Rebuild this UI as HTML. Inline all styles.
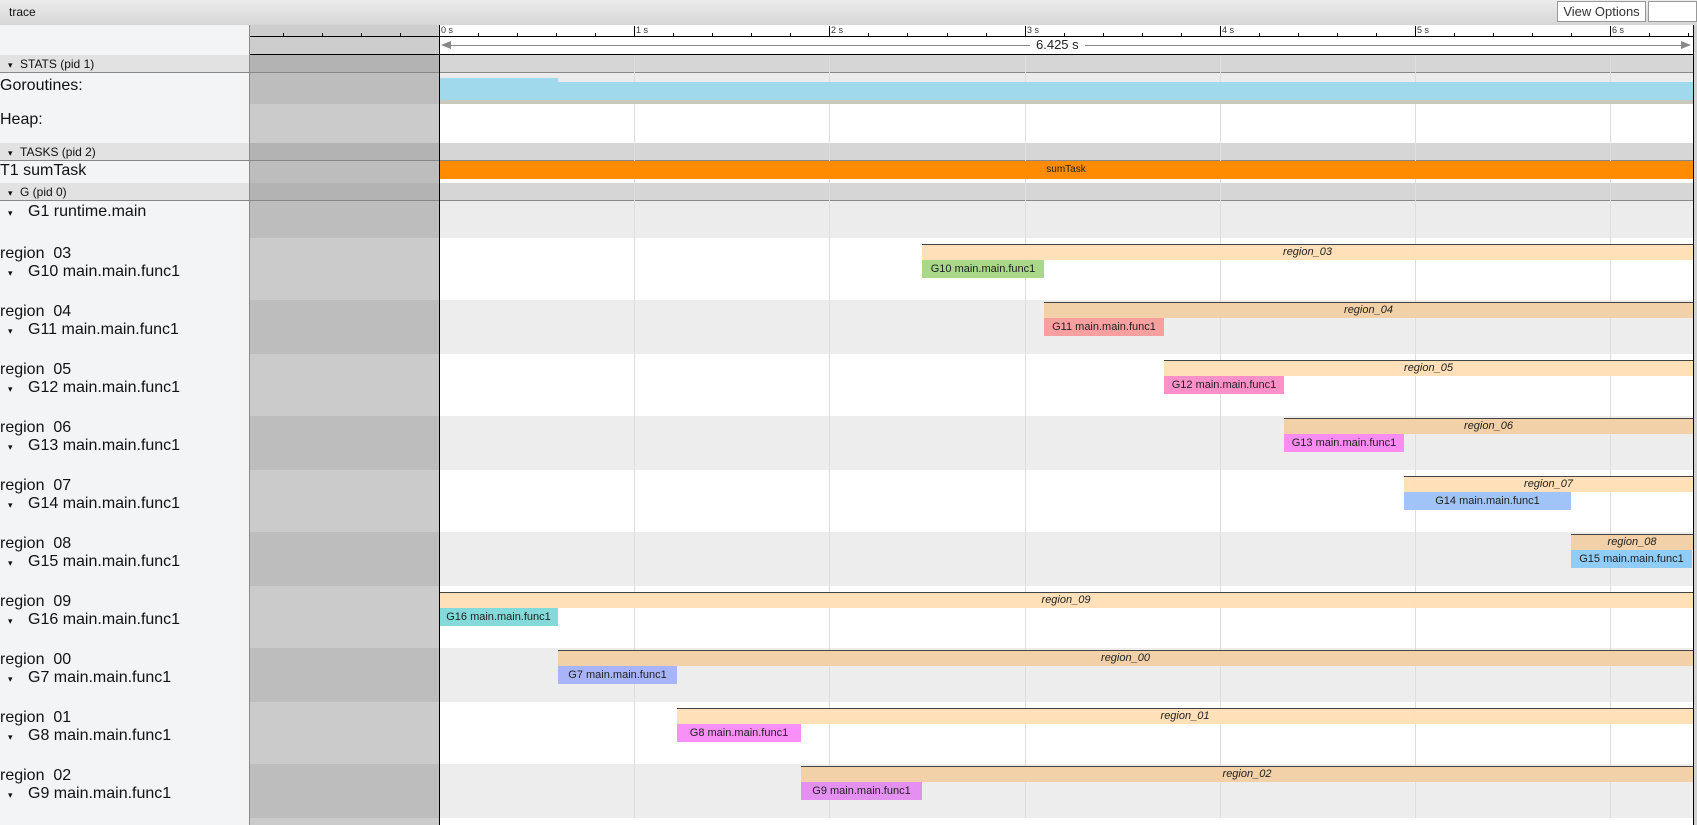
<!DOCTYPE html>
<html><head><meta charset="utf-8"><style>
*{margin:0;padding:0;box-sizing:border-box}
body{width:1697px;height:825px;overflow:hidden;position:relative;background:#f3f4f6;font-family:"Liberation Sans",sans-serif;color:#111}
div{position:absolute}
.t{white-space:nowrap}
.lbl{font-size:16px;left:0}
.gb{font-size:11px;text-align:center;line-height:18px;color:#222;overflow:hidden;white-space:nowrap}
.rb{border-top:1px solid #444;font-size:11px;font-style:italic;text-align:center;line-height:14px;color:#222;white-space:nowrap}
.tri{font-size:9px;display:inline-block;width:20px}
</style></head><body>
<div style="left:0;top:0;width:1697px;height:25px;background:linear-gradient(#ececec,#d6d6d6)"></div>
<div class="t" style="left:9px;top:5px;font-size:12px">trace</div>
<div class="t" style="left:1557px;top:1px;width:89px;height:21px;background:#fff;border:1px solid #999;font-size:13px;line-height:19px;text-align:center;color:#333">View Options</div>
<div style="left:1648px;top:1px;width:49px;height:21px;background:#fff;border:1px solid #999"></div>
<div id="c"></div>
<script>
var h='';
function d(x,y,w,hh,s,txt){h+='<div style="left:'+x+'px;top:'+y+'px;width:'+w+'px;height:'+hh+'px;'+s+'">'+(txt||'')+'</div>';}
var X0=439,PX=195.2,XE=1693;
d(X0,25,XE-X0,30,'background:#fff');
d(249,25,X0-249,30,'background:#cdcdcd');
d(249,36,XE-249,1,'background:#000');
d(249,54,XE-249,1,'background:#000');
for(var i=-5;i<34;i++){var x=Math.round(X0+i*PX/5);if(x<249||x>XE)continue;
 if(i%5==0){d(x,26,1,11,'background:#000');var lab=(i/5<0?'1':''+i/5)+' s';h+='<div class="t" style="left:'+(x+2)+'px;top:25px;font-size:9px;color:#333">'+lab+'</div>';}
 else d(x,33,1,4,'background:#000');}
d(X0+4,45,XE-X0-8,1,'background:#888');
h+='<div style="left:'+(X0+2)+'px;top:41px;width:0;height:0;border-top:4px solid transparent;border-bottom:4px solid transparent;border-right:10px solid #888"></div>';
h+='<div style="left:'+(XE-12)+'px;top:41px;width:0;height:0;border-top:4px solid transparent;border-bottom:4px solid transparent;border-left:10px solid #888"></div>';
h+='<div class="t" style="left:1030px;top:37px;padding:0 6px;background:#fff;font-size:13px;color:#222">6.425 s</div>';
function row(y,hh,left,mid,main){d(0,y,249,hh,'background:'+left);d(249,y,X0-249,hh,'background:'+mid);d(X0,y,XE-X0,hh,'background:'+main);}
function hdr(y,txt){row(y,18,'#e2e2e2','#b3b3b3','#d6d6d6');d(0,y+17,XE,1,'background:#888');h+='<div class="t" style="left:8px;top:'+(y+2)+'px;font-size:12px"><span class="tri" style="width:12px">▾</span>'+txt+'</div>';}
hdr(55,'STATS (pid 1)');
row(73,31,'#f3f4f6','#bdbdbd','#ececec');
row(104,39,'#f3f4f6','#cbcbcb','#fff');
hdr(143,'TASKS (pid 2)');
row(161,22,'#f3f4f6','#bdbdbd','#fff');
hdr(183,'G (pid 0)');
row(201,37,'#f3f4f6','#bdbdbd','#ececec');
for(var s=1;s<=6;s++){d(Math.round(X0+s*PX),55,1,183,'background:#dedede');}
d(X0,78,558-X0,22,'background:#a0d8ec');d(558,82,XE-558,18,'background:#a0d8ec');d(X0,100,XE-X0,4,'background:#c8c8bc');
h+='<div class="t lbl" style="top:77px">Goroutines:</div>';
h+='<div class="t lbl" style="top:111px">Heap:</div>';
d(X0,161,XE-X0,18,'background:#ff8c00;font-size:10px;text-align:center;line-height:18px;color:#222','sumTask');
h+='<div class="t lbl" style="top:162px">T1 sumTask</div>';
h+='<div class="t lbl" style="top:203px;left:8px"><span class="tri">▾</span>G1 runtime.main</div>';
var R=[['03','G10',922,1044,'#a8d888'],['04','G11',1044,1164,'#f8a0a0'],['05','G12',1164,1284,'#fd90c8'],['06','G13',1284,1404,'#f88cf0'],['07','G14',1404,1571,'#a0c4f8'],['08','G15',1571,1692,'#90ccf8'],['09','G16',439,558,'#84dada'],['00','G7',558,677,'#a8b4f8'],['01','G8',677,801,'#f890f8'],['02','G9',801,922,'#e490f0']];
var y=238;
for(var k=0;k<R.length;k++){var w=k%2==0,hh=w?62:54,o=w?6:2,r=R[k];
 row(y,hh,'#f3f4f6',w?'#cbcbcb':'#bdbdbd',w?'#fff':'#ededed');
 for(var s=1;s<=6;s++)d(Math.round(X0+s*PX),y,1,hh,'background:#dedede');
 h+='<div class="rb" style="left:'+r[2]+'px;top:'+(y+o)+'px;width:'+(XE-r[2])+'px;height:16px;background:'+(w?'rgba(255,222,180,0.95)':'#f2d0a8')+'">region_'+r[0]+'</div>';
 d(r[2],y+o+16,r[3]-r[2],18,'background:'+r[4],'<div class="gb" style="position:static">'+r[1]+' main.main.func1</div>');
 h+='<div class="t lbl" style="top:'+(y+o+1)+'px">region&nbsp; '+r[0]+'</div>';
 h+='<div class="t lbl" style="top:'+(y+o+19)+'px;left:8px"><span class="tri">▾</span>'+r[1]+' main.main.func1</div>';
 y+=hh;}
row(818,7,'#f3f4f6','#cbcbcb','#fff');
d(249,25,1,800,'background:#888');
d(X0,25,1,800,'background:#000');
d(XE,25,1,800,'background:#000');
d(XE+1,25,4,800,'background:#d0d0d0');
document.getElementById('c').innerHTML=h;
</script>
</body></html>
